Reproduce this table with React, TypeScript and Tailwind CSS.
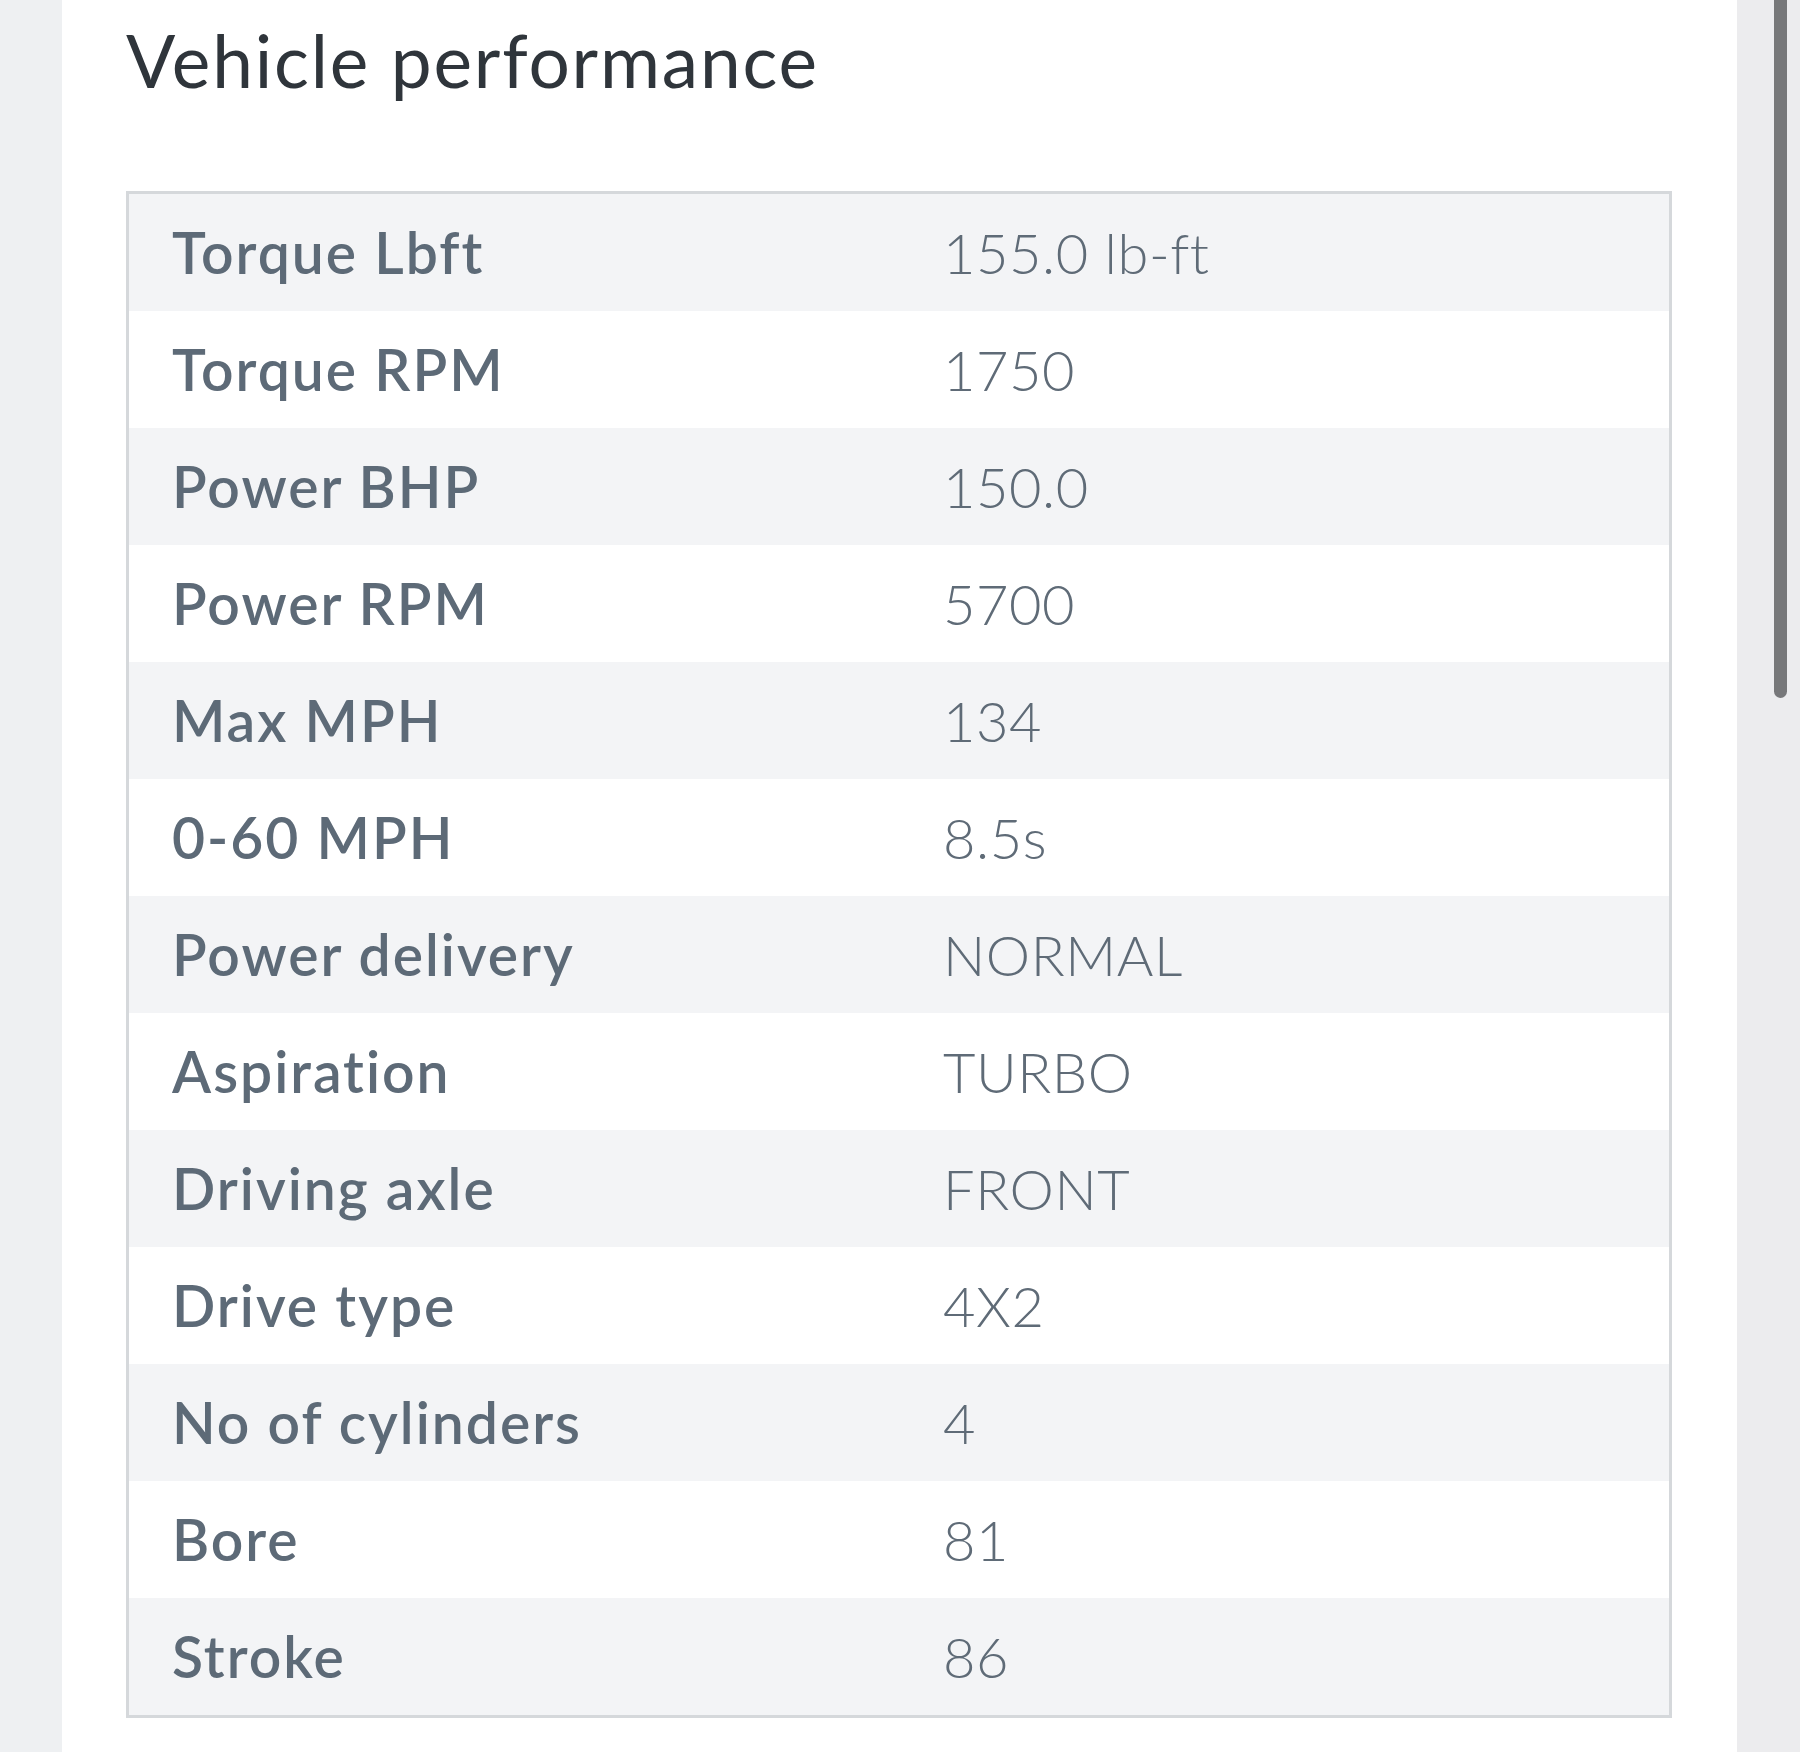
import React from "react";

const specs = [
  { label: "Torque Lbft", value: "155.0 lb-ft" },
  { label: "Torque RPM", value: "1750" },
  { label: "Power BHP", value: "150.0" },
  { label: "Power RPM", value: "5700" },
  { label: "Max MPH", value: "134" },
  { label: "0-60 MPH", value: "8.5s" },
  { label: "Power delivery", value: "NORMAL" },
  { label: "Aspiration", value: "TURBO" },
  { label: "Driving axle", value: "FRONT" },
  { label: "Drive type", value: "4X2" },
  { label: "No of cylinders", value: "4" },
  { label: "Bore", value: "81" },
  { label: "Stroke", value: "86" },
];

const App = () => {
  return (
    <div className="flex w-[1800px] h-[1752px] bg-[#eef0f2] overflow-hidden font-['Lato','Open_Sans',sans-serif]">
      <div className="w-[62px] shrink-0" />

      <div className="w-[1675px] shrink-0 bg-white pl-[64px] pr-[65px]">
        <h2 className="pt-[24px] h-[191px] text-[73px] leading-none font-normal tracking-[0.025em] text-[#2f353b]">
          Vehicle performance
        </h2>

        <div className="border-[3px] border-[#d5d8db]">
          {specs.map((spec, index) => (
            <div
              key={index}
              className={`flex items-center h-[117px] ${
                index % 2 === 0 ? "bg-[#f3f4f6]" : "bg-white"
              }`}
            >
              <div className="w-[814px] shrink-0 pl-[43px] text-[57px] font-semibold tracking-[0.035em] text-[#5d6a77]">
                {spec.label}
              </div>
              <div className="text-[56px] font-light tracking-[0.01em] text-[#5f6b77]">
                {spec.value}
              </div>
            </div>
          ))}
        </div>
      </div>

      <div className="flex-1 bg-[#ececee] pl-[37px]">
        <div className="w-[13px] h-[698px] rounded-b-full bg-[#77787a]" />
      </div>
    </div>
  );
};

export default App;
